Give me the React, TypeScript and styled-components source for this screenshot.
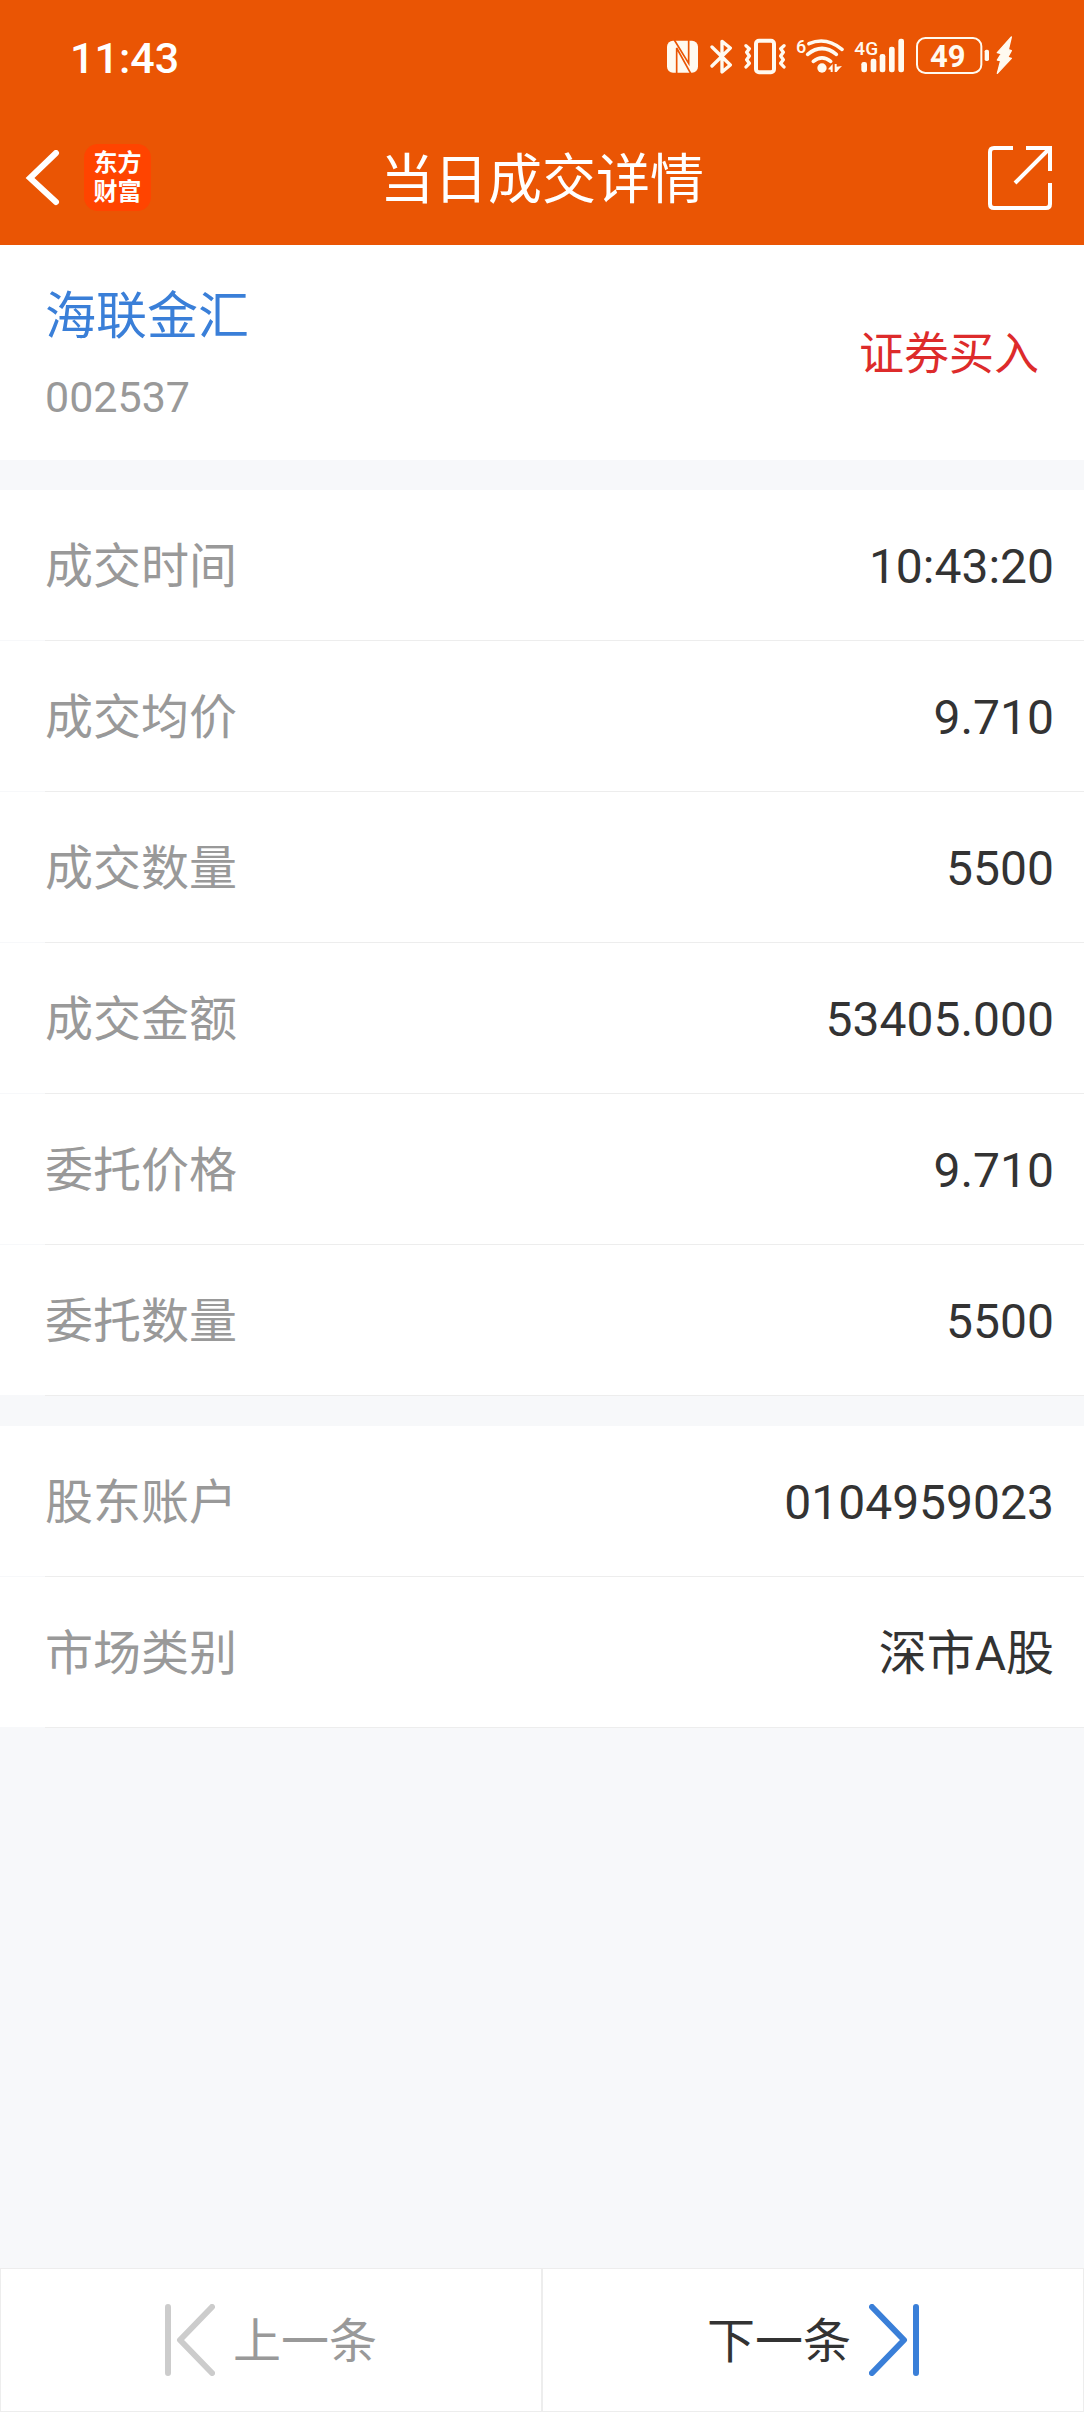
import React from 'react';
import styled, { createGlobalStyle } from 'styled-components';

const fontStack = 'Roboto, "Noto Sans CJK SC", "Noto Sans", sans-serif';

const GlobalStyle = createGlobalStyle`
  * { box-sizing: border-box; }
  body {
    margin: 0;
    background: #f7f8fa;
    font-family: ${fontStack};
    color: #333333;
  }
`;

const Page = styled.div`
  display: flex;
  flex-direction: column;
  min-height: 100vh;
`;

const Top = styled.header`
  background: #ea5504;
  color: #ffffff;
`;

const StatusBar = styled.div`
  display: flex;
  align-items: center;
  justify-content: space-between;
  height: 112px;
  padding: 0 72px 0 70px;
`;

const Clock = styled.time`
  padding-top: 4px;
  font-size: 43px;
  line-height: 48px;
  font-weight: 500;
`;

const StatusIcons = styled.div`
  display: flex;
  align-items: center;
  gap: 10px;
`;

const Glyph = styled.svg`
  display: block;
  height: 40px;
  flex: none;
  fill: #fffaf0;
`;

const TitleBar = styled.div`
  display: grid;
  grid-template-columns: 1fr auto 1fr;
  align-items: center;
  height: 133px;
  padding: 0 24px 2px;
`;

const Lead = styled.div`
  display: flex;
  align-items: center;
  gap: 24px;
`;

const IconButton = styled.button`
  display: block;
  padding: 0;
  border: 0;
  background: none;
  color: inherit;
  cursor: pointer;
`;

const ShareButton = styled(IconButton)`
  justify-self: end;
  padding-right: 8px;
`;

const Drawing = styled.svg`
  display: block;
  fill: none;
  stroke: currentColor;
`;

const Brand = styled.div`
  display: grid;
  align-content: center;
  justify-items: center;
  width: 67px;
  height: 67px;
  border-radius: 14px;
  background: #ff4400;
  font-size: 24px;
  line-height: 29px;
  font-weight: 700;
`;

const Title = styled.h1`
  margin: 0;
  padding-top: 6px;
  font-size: 54px;
  line-height: 64px;
  font-weight: 400;
`;

const Stock = styled.section`
  display: flex;
  align-items: center;
  justify-content: space-between;
  min-height: 215px;
  padding: 4px 45px 0;
  background: #ffffff;
`;

const StockText = styled.div`
  display: grid;
  gap: 20px;
  padding-top: 4px;
  line-height: 60px;
`;

const StockName = styled.a`
  font-size: 51px;
  color: #3a7fd8;
  text-decoration: none;
`;

const StockCode = styled.span`
  font-size: 43px;
  color: #999999;
`;

const Side = styled.strong`
  font-size: 45px;
  line-height: 60px;
  font-weight: 400;
  color: #dd2b2b;
`;

const Group = styled.dl`
  margin: 30px 0 0;
`;

const Item = styled.div`
  &::after {
    content: '';
    display: block;
    height: 1px;
    margin-left: 45px;
    background: #ededed;
  }
`;

const Row = styled.div`
  display: flex;
  align-items: center;
  justify-content: space-between;
  height: 150px;
  padding: 4px 30px 0 45px;
  background: #ffffff;
  font-size: 48px;
  line-height: 60px;
`;

const Label = styled.dt`
  color: #999999;
`;

const Value = styled.dd`
  margin: 0;
`;

const Pager = styled.nav`
  display: flex;
  margin-top: auto;
`;

const PageButton = styled.button<{ $muted?: boolean }>`
  display: flex;
  flex: 1;
  align-items: center;
  justify-content: center;
  gap: 18px;
  height: 144px;
  padding: 0;
  border: 1px solid #ededed;
  background: #ffffff;
  font-family: inherit;
  font-size: 48px;
  line-height: 60px;
  color: ${(p) => (p.$muted ? '#999999' : '#333333')};
  cursor: pointer;
`;

const PageLabel = styled.span`
  padding-top: 4px;
`;

const PageIcon = styled(Drawing)<{ $color: string }>`
  color: ${(p) => p.$color};
`;

const tradeRows = [
  ['成交时间', '10:43:20'],
  ['成交均价', '9.710'],
  ['成交数量', '5500'],
  ['成交金额', '53405.000'],
  ['委托价格', '9.710'],
  ['委托数量', '5500'],
];

const accountRows = [
  ['股东账户', '0104959023'],
  ['市场类别', '深市A股'],
];

function Details({ rows }: { rows: string[][] }) {
  return (
    <Group>
      {rows.map(([label, value]) => (
        <Item key={label}>
          <Row>
            <Label>{label}</Label>
            <Value>{value}</Value>
          </Row>
        </Item>
      ))}
    </Group>
  );
}

function Nfc() {
  return (
    <Glyph width="33" viewBox="81 78 99 120" aria-label="NFC">
      <rect x="81" y="92" width="93" height="96" rx="18" />
      <path d="M110 190V114L152 190M146 90V160L103 90" fill="none" stroke="#ea5504" strokeWidth="5" />
    </Glyph>
  );
}

function Bluetooth() {
  return (
    <Glyph width="24" viewBox="208 78 72 120" aria-label="蓝牙">
      <path d="M214 111L269 165L244 186V94L269 114L214 168" fill="none" stroke="#fffaf0" strokeWidth="10" strokeLinejoin="round" strokeLinecap="round" />
    </Glyph>
  );
}

function Vibrate() {
  return (
    <Glyph width="42" viewBox="312 78 126 120" aria-label="振动">
      <g fill="none" stroke="#fffaf0" strokeLinejoin="round" strokeLinecap="round">
        <rect x="348" y="92" width="54" height="95" rx="9" strokeWidth="12" />
        <path d="M318 107L328 116L320 127L328 138L320 149L328 160L318 171" strokeWidth="10" />
        <path d="M432 107L422 116L430 127L422 138L430 149L422 160L432 171" strokeWidth="10" />
      </g>
    </Glyph>
  );
}

function Wifi() {
  return (
    <Glyph width="48" viewBox="468 78 144 120" aria-label="Wi-Fi 6">
      <text x="468" y="129" fontSize="54" fontWeight="500">6</text>
      <g fill="none" stroke="#fffaf0" strokeWidth="11" strokeLinecap="round">
        <path d="M507 101Q558 79 606 118" />
        <path d="M503 133Q546 98 589 133" />
        <path d="M520 154Q546 133 572 154" />
      </g>
      <circle cx="546" cy="174" r="14" />
      <path d="M564 178L578 162V186H572V179ZM584 162H590V170L606 168L598 176L590 186H584Z" />
    </Glyph>
  );
}

function Signal() {
  return (
    <Glyph width="52" viewBox="642 78 156 120" aria-label="4G">
      <text x="643" y="136" fontSize="57" fontWeight="500">4G</text>
      <rect x="664" y="156" width="17" height="31" rx="7" />
      <rect x="692" y="146" width="17" height="41" rx="7" />
      <rect x="719" y="132" width="17" height="55" rx="7" />
      <rect x="747" y="110" width="17" height="77" rx="7" />
      <rect x="775" y="86" width="17" height="101" rx="7" />
    </Glyph>
  );
}

function Battery() {
  return (
    <Glyph width="96" viewBox="828 78 288 120" aria-label="电量 49%">
      <rect x="831" y="84" width="193" height="105" rx="25" fill="none" stroke="#fffaf0" strokeWidth="6" />
      <text x="923" y="170" fontSize="93" fontWeight="700" textAnchor="middle">49</text>
      <rect x="1034" y="119" width="13" height="34" rx="5" />
      <path
        d="M1114 81L1072 128L1084 131L1072 150L1082 152L1072 190L1114 145L1103 142L1114 122L1105 119Z"
        stroke="#fffaf0"
        strokeWidth="4"
        strokeLinejoin="round"
      />
    </Glyph>
  );
}

export default function App() {
  return (
    <Page>
      <GlobalStyle />
      <Top>
        <StatusBar>
          <Clock>11:43</Clock>
          <StatusIcons>
            <Nfc />
            <Bluetooth />
            <Vibrate />
            <Wifi />
            <Signal />
            <Battery />
          </StatusIcons>
        </StatusBar>
        <TitleBar>
          <Lead>
            <IconButton aria-label="返回">
              <Drawing width="36" height="56" viewBox="0 0 36 56" strokeWidth="6">
                <path d="M32 3L6 28L32 52" strokeLinecap="round" />
              </Drawing>
            </IconButton>
            <Brand>
              <span>东方</span>
              <span>财富</span>
            </Brand>
          </Lead>
          <Title>当日成交详情</Title>
          <ShareButton aria-label="分享">
            <Drawing width="64" height="64" viewBox="0 0 64 64" strokeWidth="4">
              <path d="M25 2H6Q2 2 2 6V58Q2 62 6 62H58Q62 62 62 58V37" />
              <path d="M38 2H62V25M62 2L27 37" />
            </Drawing>
          </ShareButton>
        </TitleBar>
      </Top>
      <main>
        <Stock>
          <StockText>
            <StockName href="#stock">海联金汇</StockName>
            <StockCode>002537</StockCode>
          </StockText>
          <Side>证券买入</Side>
        </Stock>
        <Details rows={tradeRows} />
        <Details rows={accountRows} />
      </main>
      <Pager>
        <PageButton $muted>
          <PageIcon $color="#cccccc" width="50" height="72" viewBox="0 0 50 72" strokeWidth="6" strokeLinecap="round" strokeLinejoin="round">
            <path d="M3 3V69M47 3L15 36L47 69" />
          </PageIcon>
          <PageLabel>上一条</PageLabel>
        </PageButton>
        <PageButton>
          <PageLabel>下一条</PageLabel>
          <PageIcon $color="#3a7fd8" width="50" height="72" viewBox="0 0 50 72" strokeWidth="6" strokeLinecap="round" strokeLinejoin="round">
            <path d="M47 3V69M3 3L35 36L3 69" />
          </PageIcon>
        </PageButton>
      </Pager>
    </Page>
  );
}
